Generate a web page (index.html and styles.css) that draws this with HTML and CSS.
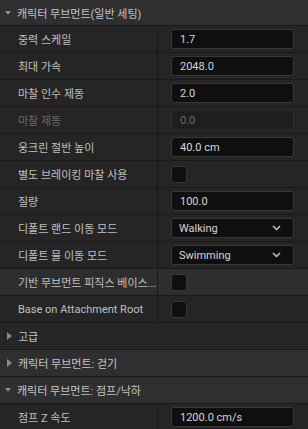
FILE: index.html
```html
<!DOCTYPE html>
<html lang="ko">
<head>
<meta charset="utf-8">
<link rel="stylesheet" href="styles.css">
</head>
<body>
<div class="panel">
  <div class="cat open top"><span class="arrow down"></span><span class="cat-title">캐릭터 무브먼트(일반 세팅)</span></div>

  <div class="row"><div class="label">중력 스케일</div><div class="value"><div class="input">1.7</div></div></div>
  <div class="row"><div class="label">최대 가속</div><div class="value"><div class="input">2048.0</div></div></div>
  <div class="row"><div class="label">마찰 인수 제동</div><div class="value"><div class="input">2.0</div></div></div>
  <div class="row disabled"><div class="label">마찰 제동</div><div class="value"><div class="input">0.0</div></div></div>
  <div class="row"><div class="label">웅크린 절반 높이</div><div class="value"><div class="input">40.0 cm</div></div></div>
  <div class="row"><div class="label">별도 브레이킹 마찰 사용</div><div class="value"><div class="check"></div></div></div>
  <div class="row"><div class="label">질량</div><div class="value"><div class="input">100.0</div></div></div>
  <div class="row"><div class="label">디폴트 랜드 이동 모드</div><div class="value"><div class="input select"><span>Walking</span><svg class="chev" width="9" height="6" viewBox="0 0 9 6"><path d="M1 1 L4.5 4.5 L8 1" fill="none" stroke="#c8c8c8" stroke-width="1.5"/></svg></div></div></div>
  <div class="row"><div class="label">디폴트 물 이동 모드</div><div class="value"><div class="input select"><span>Swimming</span><svg class="chev" width="9" height="6" viewBox="0 0 9 6"><path d="M1 1 L4.5 4.5 L8 1" fill="none" stroke="#c8c8c8" stroke-width="1.5"/></svg></div></div></div>
  <div class="row hover"><div class="label">기반 무브먼트 피직스 베이스...</div><div class="value"><div class="check"></div></div></div>
  <div class="row"><div class="label">Base on Attachment Root</div><div class="value"><div class="check"></div></div></div>

  <div class="sub"><span class="arrow right"></span><span class="cat-title">고급</span></div>
  <div class="cat"><span class="arrow right"></span><span class="cat-title">캐릭터 무브먼트: 걷기</span></div>
  <div class="cat open"><span class="arrow down"></span><span class="cat-title">캐릭터 무브먼트: 점프/낙하</span></div>
  <div class="row"><div class="label">점프 Z 속도</div><div class="value"><div class="input">1200.0 cm/s</div></div></div>
</div>
</body>
</html>
```
FILE: styles.css
```css
html, body {
  margin: 0;
  padding: 0;
  background: #1c1c1c;
}
body {
  font-family: "Roboto", "Noto Sans CJK KR", sans-serif;
  font-size: 11px;
  color: #c0c0c0;
  width: 308px;
  height: 429px;
  overflow: hidden;
}
.panel {
  display: flex;
  flex-direction: column;
  gap: 1px;
  background: #1a1a1a;
}
.cat, .sub {
  height: 26px;
  display: flex;
  align-items: center;
  background: #2f2f2f;
  color: #c4c4c4;
}
.cat.top {
  height: 25px;
}
.sub {
  background: #262626;
}
.cat-title {
  margin-left: 6px;
  white-space: nowrap;
}
.arrow {
  width: 0;
  height: 0;
  margin-left: 6px;
}
.arrow.down {
  border-left: 3.5px solid transparent;
  border-right: 3.5px solid transparent;
  border-top: 4px solid #8a8a8a;
  margin-left: 5px;
}
.arrow.right {
  border-top: 4px solid transparent;
  border-bottom: 4px solid transparent;
  border-left: 5px solid #8a8a8a;
  margin-left: 7px;
}
.row {
  height: 26px;
  display: grid;
  grid-template-columns: 157px 1fr;
  column-gap: 1px;
  background: #1a1a1a;
}
.row > .label, .row > .value {
  background: #252525;
}
.row.hover > .label, .row.hover > .value {
  background: #2e2e2e;
}
.label {
  padding-left: 18px;
  padding-right: 1px;
  display: flex;
  align-items: center;
  white-space: nowrap;
  overflow: hidden;
  min-width: 0;
}
.value {
  display: flex;
  align-items: center;
  padding-left: 13px;
}
.input {
  width: 123px;
  height: 20px;
  box-sizing: border-box;
  background: #0f0f0f;
  border: 1px solid #383838;
  border-radius: 3px;
  display: flex;
  align-items: center;
  padding-left: 8px;
  color: #d6d6d6;
}
.disabled .label {
  color: #686868;
}
.disabled .input {
  background: #1e1e1e;
  border-color: #2c2c2c;
  color: #6a6a6a;
}
.select {
  justify-content: space-between;
  padding-left: 7px;
  padding-right: 12px;
}
.chev {
  display: block;
}
.check {
  width: 16px;
  height: 17px;
  box-sizing: border-box;
  background: #0f0f0f;
  border: 1px solid #363636;
  border-radius: 3px;
}
```
